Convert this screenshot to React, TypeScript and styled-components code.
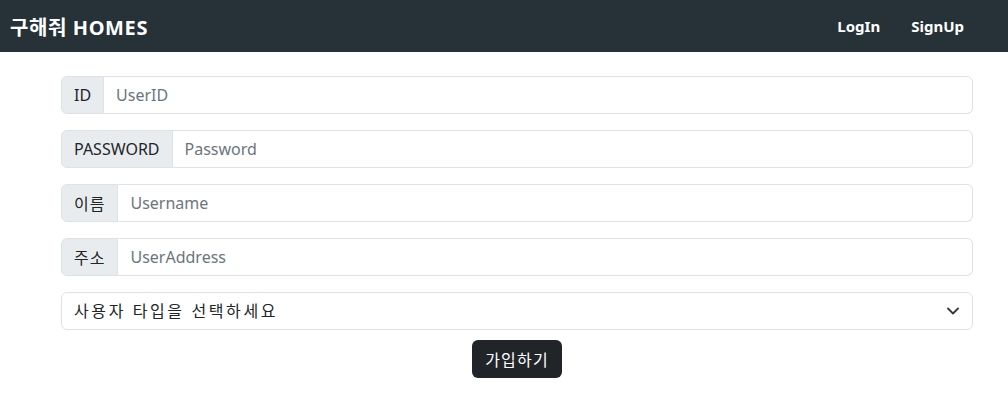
import React from 'react';
import styled, { createGlobalStyle } from 'styled-components';

const GlobalStyle = createGlobalStyle`
  body {
    margin: 0;
    background: #fff;
    font-family: "Noto Sans", "Noto Sans CJK KR", sans-serif;
    color: #212529;
  }
  * { box-sizing: border-box; }
`;

const NavBar = styled.nav`
  height: 52px;
  background: #263238;
  display: flex;
  align-items: center;
  justify-content: space-between;
  padding: 0 44px 0 10px;
`;

const Brand = styled.div`
  color: #fff;
  font-size: 20px;
  font-weight: 700;
  letter-spacing: 0.6px;
`;

const NavLinks = styled.div`
  display: flex;
  gap: 31px;
`;

const NavLink = styled.a`
  color: #fff;
  font-size: 15px;
  font-weight: 700;
  text-decoration: none;
  cursor: pointer;
`;

const Form = styled.form`
  display: flex;
  flex-direction: column;
  gap: 16px;
  padding: 24px 35px 0 61px;
`;

const InputGroup = styled.div`
  display: flex;
  height: 38px;
`;

const Addon = styled.span<{ $ko?: boolean }>`
  display: flex;
  align-items: center;
  padding: 0 12px;
  background: #e9ecef;
  border: 1px solid #dee2e6;
  border-radius: 6px 0 0 6px;
  font-size: 16px;
  color: #212529;
  white-space: nowrap;
  letter-spacing: ${(p) => (p.$ko ? '1px' : '0')};
`;

const Input = styled.input`
  flex: 1;
  min-width: 0;
  border: 1px solid #dee2e6;
  border-left: none;
  border-radius: 0 6px 6px 0;
  padding: 0 12px;
  font-size: 16px;
  font-family: inherit;
  color: #212529;
  outline: none;
  &::placeholder {
    color: #6c757d;
  }
`;

const SelectWrap = styled.div`
  position: relative;
  height: 38px;
`;

const Select = styled.select`
  width: 100%;
  height: 100%;
  appearance: none;
  border: 1px solid #dee2e6;
  border-radius: 6px;
  padding: 0 36px 0 12px;
  font-size: 16px;
  font-family: inherit;
  letter-spacing: 2.6px;
  color: #212529;
  background: #fff;
  outline: none;
`;

const Chevron = styled.svg`
  position: absolute;
  right: 14px;
  top: 50%;
  transform: translateY(-50%);
  pointer-events: none;
`;

const ButtonRow = styled.div`
  display: flex;
  justify-content: center;
  margin-top: -6px;
`;

const SubmitButton = styled.button`
  background: #212529;
  color: #fff;
  border: none;
  border-radius: 6px;
  height: 38px;
  padding: 0 13px;
  font-size: 16px;
  font-family: inherit;
  letter-spacing: 1.2px;
  cursor: pointer;
`;

const fields = [
  { label: 'ID', placeholder: 'UserID', type: 'text', ko: false },
  { label: 'PASSWORD', placeholder: 'Password', type: 'password', ko: false },
  { label: '이름', placeholder: 'Username', type: 'text', ko: true },
  { label: '주소', placeholder: 'UserAddress', type: 'text', ko: true },
];

const App: React.FC = () => {
  return (
    <>
      <GlobalStyle />
      <NavBar>
        <Brand>구해줘 HOMES</Brand>
        <NavLinks>
          <NavLink>LogIn</NavLink>
          <NavLink>SignUp</NavLink>
        </NavLinks>
      </NavBar>
      <Form onSubmit={(e) => e.preventDefault()}>
        {fields.map((f) => (
          <InputGroup key={f.label}>
            <Addon $ko={f.ko}>{f.label}</Addon>
            <Input type={f.type} placeholder={f.placeholder} />
          </InputGroup>
        ))}
        <SelectWrap>
          <Select defaultValue="">
            <option value="">사용자 타입을 선택하세요</option>
            <option value="buyer">구매자</option>
            <option value="seller">판매자</option>
          </Select>
          <Chevron width="12" height="8" viewBox="0 0 12 8">
            <path d="M1 1.5l5 5 5-5" fill="none" stroke="#343a40" strokeWidth="1.8" strokeLinecap="round" strokeLinejoin="round" />
          </Chevron>
        </SelectWrap>
        <ButtonRow>
          <SubmitButton type="submit">가입하기</SubmitButton>
        </ButtonRow>
      </Form>
    </>
  );
};

export default App;
